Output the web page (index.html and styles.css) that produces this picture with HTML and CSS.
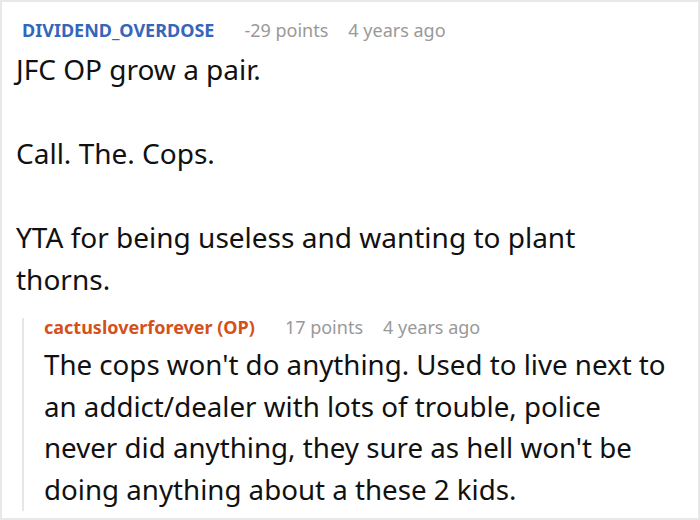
FILE: index.html
```html
<!DOCTYPE html>
<html>
<head>
<meta charset="utf-8">
<link rel="stylesheet" href="styles.css">
</head>
<body>
<div class="frame">
  <div class="comment">
    <div class="meta">
      <span class="author">DIVIDEND_OVERDOSE</span>
      <span class="points">-29 points</span>
      <span class="time">4 years ago</span>
    </div>
    <div class="body">
      <p>JFC OP grow a pair.</p>
      <p>Call. The. Cops.</p>
      <p>YTA for being useless and wanting to plant thorns.</p>
    </div>
    <div class="reply">
      <div class="meta">
        <span class="author op">cactusloverforever (OP)</span>
        <span class="points">17 points</span>
        <span class="time">4 years ago</span>
      </div>
      <div class="body">
        <p>The cops won't do anything. Used to live next to an addict/dealer with lots of trouble, police never did anything, they sure as hell won't be doing anything about a these 2 kids.</p>
      </div>
    </div>
  </div>
</div>
</body>
</html>
```

FILE: styles.css
```css
html, body {
  margin: 0;
  padding: 0;
  background: #ffffff;
}
body {
  font-family: "Noto Sans", "Open Sans", sans-serif;
  color: #111111;
}
.frame {
  width: 700px;
  height: 520px;
  box-sizing: border-box;
  border: 2px solid #e8e8e8;
  overflow: hidden;
}
.comment {
  padding: 15px 25px 0 14px;
}
.meta {
  display: flex;
  align-items: baseline;
  gap: 20px;
  font-size: 18px;
  line-height: 26px;
  margin-left: 6px;
}
.author {
  font-weight: 700;
  color: #3566b8;
  margin-right: 10px;
}
.author.op {
  color: #d4511d;
}
.points, .time {
  color: #999999;
}
.body {
  font-size: 28px;
  line-height: 42px;
  margin-top: 5px;
}
.body p {
  margin: 0 0 42px 0;
}
.body p:last-child {
  margin-bottom: 0;
}
.reply {
  margin: 18px 0 0 6px;
  border-left: 2px solid #e6e6e6;
  padding-left: 20px;
}
.reply .meta {
  margin-left: 0;
  line-height: 18px;
}
.reply .body {
  font-size: 27.7px;
  line-height: 41.7px;
  margin-top: 8px;
}
```
